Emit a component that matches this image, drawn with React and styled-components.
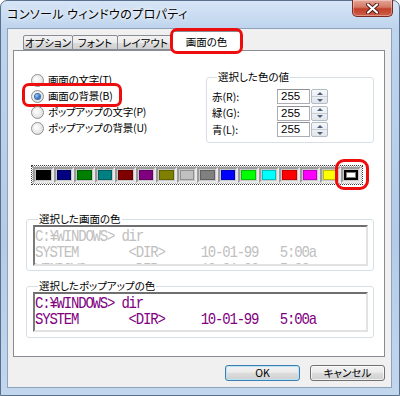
import React from 'react';
import styled, { createGlobalStyle, css } from 'styled-components';

const GlobalStyle = createGlobalStyle`
  html, body {
    margin: 0;
    padding: 0;
    background: #ffffff;
  }
  body {
    font-family: "Noto Sans CJK JP", "Noto Sans", sans-serif;
    font-size: 10.5px;
    color: #000;
    font-feature-settings: "palt";
  }
`;

const ring = css`
  &::after {
    content: '';
    position: absolute;
    border: 3px solid #ee0d0d;
    border-radius: 7px;
    pointer-events: none;
  }
`;

const Window = styled.div`
  width: 400px;
  height: 396px;
  box-sizing: border-box;
  display: flex;
  flex-direction: column;
  background: linear-gradient(#d6e5f6, #bed4ed 28px, #b4cbe7 60%, #c2d7ee);
  border: 1px solid #5a6f8c;
  border-radius: 7px 7px 0 0;
  padding: 0 7px 7px 6px;
`;

const TitleBar = styled.div`
  height: 27px;
  display: flex;
  align-items: flex-start;
  justify-content: space-between;
`;

const Title = styled.div`
  font-size: 12px;
  line-height: 14px;
  margin-top: 6px;
  letter-spacing: 0.4px;
  text-shadow: 0 0 6px #ffffff, 0 0 3px #ffffff;
`;

const CloseButton = styled.div`
  width: 41px;
  height: 17px;
  margin: -1px -1px 0 0;
  box-sizing: border-box;
  border: 1px solid #7a2a22;
  border-top: none;
  border-radius: 0 0 5px 5px;
  background: linear-gradient(#e6a597, #d47864 45%, #c0402b 55%, #cf5f47);
  box-shadow: inset 0 0 0 1px rgba(255, 255, 255, 0.35);
  display: flex;
  align-items: center;
  justify-content: center;
`;

const Client = styled.div`
  flex: 1;
  display: flex;
  flex-direction: column;
  background: #f0f0f0;
  border: 1px solid #8da2bd;
  padding: 0 6px 0 5px;
`;

const TabStrip = styled.div`
  height: 21px;
  display: flex;
  align-items: flex-end;
  padding-left: 10px;
`;

const Tab = styled.div`
  position: relative;
  box-sizing: border-box;
  height: ${(p) => (p.$active ? '20px' : '15px')};
  width: ${(p) => p.$w}px;
  margin-left: -1px;
  margin-bottom: ${(p) => (p.$active ? '-1px' : '0')};
  border: 1px solid #898c95;
  border-bottom: ${(p) => (p.$active ? 'none' : '1px solid #898c95')};
  border-radius: 2px 2px 0 0;
  background: ${(p) =>
    p.$active ? '#ffffff' : 'linear-gradient(#f3f3f3, #ebebeb 50%, #dddddd 51%, #cfcfcf)'};
  z-index: ${(p) => (p.$active ? 2 : 1)};
  line-height: 13px;
  white-space: nowrap;
  text-align: center;
  padding-top: ${(p) => (p.$active ? '3px' : '0')};
  &:first-child {
    margin-left: 0;
  }
  ${(p) =>
    p.$highlight &&
    css`
      ${ring}
      &::after {
        top: -4px;
        bottom: -3px;
        left: -3px;
        right: -3px;
      }
    `}
`;

const Panel = styled.div`
  height: 307px;
  box-sizing: border-box;
  border: 1px solid #898c95;
  background: #ffffff;
  display: flex;
  flex-direction: column;
`;

const TopRow = styled.div`
  display: flex;
  justify-content: space-between;
  align-items: flex-start;
  margin-top: 20px;
  padding: 0 10px 0 17px;
`;

const RadioList = styled.div`
  display: flex;
  flex-direction: column;
  align-items: flex-start;
  padding-top: 1px;
`;

const RadioRow = styled.label`
  position: relative;
  display: inline-flex;
  align-items: center;
  height: 16px;
  line-height: 14px;
  white-space: nowrap;
  letter-spacing: -0.2px;
  ${(p) =>
    p.$highlight &&
    css`
      ${ring}
      &::after {
        top: -5px;
        bottom: -3px;
        left: -9px;
        right: -9px;
      }
    `}
`;

const RadioCircle = styled.span`
  width: 13px;
  height: 13px;
  box-sizing: border-box;
  border-radius: 50%;
  border: 1px solid #8f8f8f;
  background: radial-gradient(circle at 40% 40%, #ffffff, #e6e6e6 60%, #d0d0d0);
  margin-right: 4px;
  display: flex;
  align-items: center;
  justify-content: center;
  &::before {
    content: '';
    width: 5px;
    height: 5px;
    border-radius: 50%;
    display: ${(p) => (p.$checked ? 'block' : 'none')};
    background: radial-gradient(circle at 35% 35%, #8fd0ff, #1e62b4 70%, #0e3d86);
    box-shadow: 0 0 0 1px #3a6ea8;
  }
`;

const GroupBox = styled.fieldset`
  margin: ${(p) => p.$margin || '0'};
  padding: ${(p) => p.$pad || '0'};
  width: ${(p) => p.$w}px;
  box-sizing: border-box;
  border: 1px solid #d5dfe5;
  border-radius: 3px;
  min-width: 0;
`;

const Legend = styled.legend`
  line-height: 12px;
  padding: 0 1px;
  margin-left: 5px;
  white-space: nowrap;
`;

const ValueRows = styled.div`
  display: flex;
  flex-direction: column;
  gap: 1.5px;
`;

const ValueRow = styled.div`
  height: 15px;
  display: flex;
  align-items: center;
`;

const ValueLabel = styled.span`
  width: 65px;
  line-height: 14px;
`;

const NumberBox = styled.div`
  width: 33px;
  height: 15px;
  box-sizing: border-box;
  border: 1px solid #abadb3;
  border-top-color: #8e9097;
  padding-left: 3px;
  font-family: "Liberation Sans", Arial, sans-serif;
  font-size: 11.5px;
  line-height: 13px;
`;

const Spinner = styled.div`
  width: 17px;
  height: 15px;
  margin-left: 1px;
  box-sizing: border-box;
  display: flex;
  flex-direction: column;
  border: 1px solid #b4bcc7;
  border-radius: 2px;
  background: linear-gradient(#f6f7f9, #e3e6ea);
`;

const SpinHalf = styled.div`
  flex: 1;
  display: flex;
  align-items: center;
  justify-content: center;
  & + & {
    border-top: 1px solid #c8ced6;
  }
  &::before {
    content: '';
    border-left: 3px solid transparent;
    border-right: 3px solid transparent;
    ${(p) =>
      p.$up ? 'border-bottom: 3px solid #4c607f;' : 'border-top: 3px solid #4c607f;'}
  }
`;

const Palette = styled.div`
  margin: 22px 0 0 17px;
  width: 332px;
  height: 20px;
  box-sizing: border-box;
  border: 1px dotted #3a3a3a;
  outline: 1px dotted #a8a8a8;
  outline-offset: -2px;
  display: grid;
  grid-template-columns: repeat(16, 1fr);
  padding: 1px;
`;

const SwatchCell = styled.div`
  position: relative;
  box-sizing: border-box;
  border: 2px solid;
  border-color: #9c9c9c #e8e8e8 #e8e8e8 #9c9c9c;
  background: #c8c8c8;
  padding: 1px;
  display: flex;
  ${(p) =>
    p.$highlight &&
    css`
      ${ring}
      &::after {
        top: -10px;
        bottom: -9px;
        left: -8px;
        right: -10px;
        border-radius: 9px;
      }
    `}
`;

const SwatchFill = styled.div`
  flex: 1;
  background: ${(p) => p.$color};
  box-sizing: border-box;
  border: ${(p) => (p.$selected ? '2px solid #000' : '1px solid rgba(0,0,0,0.25)')};
  ${(p) => p.$selected && 'box-shadow: inset 0 0 0 1px #808080;'}
`;

const Preview = styled.div`
  height: ${(p) => p.$h}px;
  box-sizing: border-box;
  border: 2px solid;
  border-color: #6f6f6f #e2e2e2 #e2e2e2 #7a7a7a;
  background: #ffffff;
  overflow: hidden;
`;

const Console = styled.pre`
  margin: 0;
  padding: 0.5px 0 0 0;
  font-family: "Liberation Mono", "DejaVu Sans Mono", monospace;
  font-size: 14px;
  line-height: 14.8px;
  letter-spacing: -1.2px;
  color: ${(p) => p.$color};
  transform: scaleY(1.15);
  transform-origin: top left;
`;

const ButtonRow = styled.div`
  display: flex;
  justify-content: flex-end;
  gap: 10px;
  margin-top: 8px;
`;

const Button = styled.div`
  width: 75px;
  height: 16px;
  box-sizing: border-box;
  border: 1px solid ${(p) => (p.$default ? '#3c7fb1' : '#707070')};
  border-radius: 3px;
  background: linear-gradient(#f2f2f2, #ebebeb 45%, #dddddd 50%, #cfcfcf);
  box-shadow: ${(p) =>
    p.$default ? 'inset 0 0 0 1px #b9e4f7' : 'inset 0 0 0 1px rgba(255,255,255,0.7)'};
  display: flex;
  align-items: center;
  justify-content: center;
  line-height: 12px;
`;

const TABS = [
  { label: 'オプション', w: 50 },
  { label: 'フォント', w: 46 },
  { label: 'レイアウト', w: 56 },
  { label: '画面の色', w: 69, active: true },
];

const RADIOS = [
  { label: '画面の文字(T)' },
  { label: '画面の背景(B)', checked: true },
  { label: 'ポップアップの文字(P)' },
  { label: 'ポップアップの背景(U)' },
];

const VALUES = [
  { label: '赤(R):', value: 255 },
  { label: '緑(G):', value: 255 },
  { label: '青(L):', value: 255 },
];

const COLORS = [
  '#000000', '#000080', '#008000', '#008080',
  '#800000', '#800080', '#808000', '#c0c0c0',
  '#808080', '#0000ff', '#00ff00', '#00ffff',
  '#ff0000', '#ff00ff', '#ffff00', '#ffffff',
];

const CONSOLE_TEXT =
  'C:\u00a5WINDOWS> dir\n' +
  'SYSTEM       <DIR>     10-01-99   5:00a\n' +
  'WINDOWS      <DIR>     10-01-99   5:00a';

function CloseGlyph() {
  return (
    <svg width="13" height="11" viewBox="0 0 13 11">
      <path d="M2 1.5 L11 9.5 M11 1.5 L2 9.5" stroke="#4a1a14" strokeWidth="4" strokeLinecap="round" />
      <path d="M2 1.5 L11 9.5 M11 1.5 L2 9.5" stroke="#ffffff" strokeWidth="2.2" strokeLinecap="round" />
    </svg>
  );
}

function ColorValue({ label, value }) {
  return (
    <ValueRow>
      <ValueLabel>{label}</ValueLabel>
      <NumberBox>{value}</NumberBox>
      <Spinner>
        <SpinHalf $up />
        <SpinHalf />
      </Spinner>
    </ValueRow>
  );
}

function PreviewGroup({ title, color, margin, pad, h }) {
  return (
    <GroupBox $w={348} $margin={margin} $pad={pad}>
      <Legend>{title}</Legend>
      <Preview $h={h}>
        <Console $color={color}>{CONSOLE_TEXT}</Console>
      </Preview>
    </GroupBox>
  );
}

export default function App() {
  return (
    <>
      <GlobalStyle />
      <Window>
        <TitleBar>
          <Title>コンソール ウィンドウのプロパティ</Title>
          <CloseButton>
            <CloseGlyph />
          </CloseButton>
        </TitleBar>
        <Client>
          <TabStrip>
            {TABS.map((t) => (
              <Tab key={t.label} $w={t.w} $active={t.active} $highlight={t.active}>
                {t.label}
              </Tab>
            ))}
          </TabStrip>
          <Panel>
            <TopRow>
              <RadioList>
                {RADIOS.map((r) => (
                  <RadioRow key={r.label} $highlight={r.checked}>
                    <RadioCircle $checked={r.checked} />
                    {r.label}
                  </RadioRow>
                ))}
              </RadioList>
              <GroupBox $w={168} $pad="6px 0 5px 5px">
                <Legend>選択した色の値</Legend>
                <ValueRows>
                  {VALUES.map((v) => (
                    <ColorValue key={v.label} {...v} />
                  ))}
                </ValueRows>
              </GroupBox>
            </TopRow>
            <Palette>
              {COLORS.map((c, i) => (
                <SwatchCell key={c} $highlight={i === COLORS.length - 1}>
                  <SwatchFill $color={c} $selected={i === COLORS.length - 1} />
                </SwatchCell>
              ))}
            </Palette>
            <PreviewGroup
              title="選択した画面の色"
              color="#c0c0c0"
              margin="28px 0 0 12px"
              pad="0 5px 4px 6px"
              h={41}
            />
            <PreviewGroup
              title="選択したポップアップの色"
              color="#800080"
              margin="9px 0 0 12px"
              pad="0 5px 5px 6px"
              h={40}
            />
          </Panel>
          <ButtonRow>
            <Button $default>OK</Button>
            <Button>キャンセル</Button>
          </ButtonRow>
        </Client>
      </Window>
    </>
  );
}
